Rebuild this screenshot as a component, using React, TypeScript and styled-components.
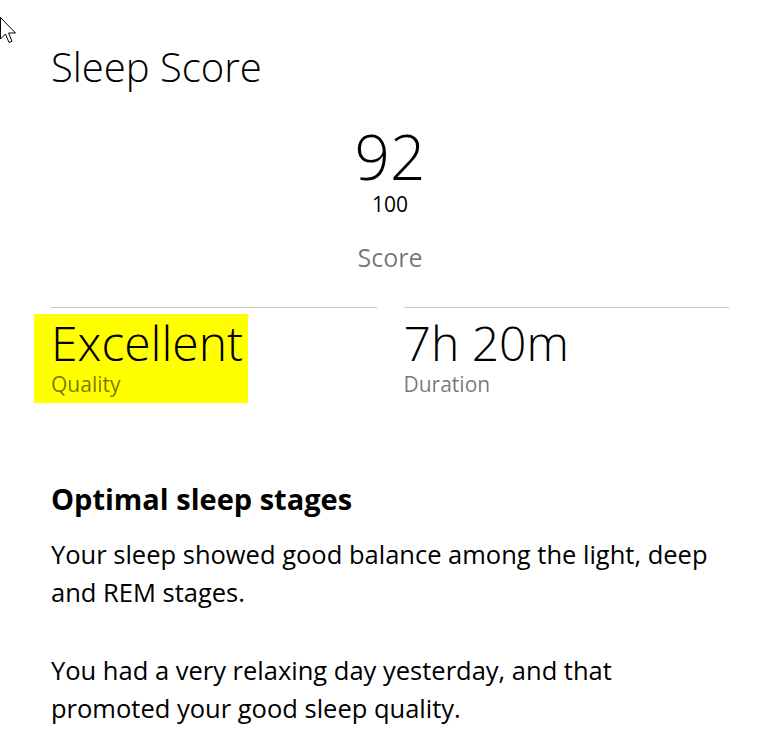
import React, { FC } from 'react'
import styled, { createGlobalStyle } from 'styled-components'

const GlobalStyle = createGlobalStyle`
  html, body {
    margin: 0;
    padding: 0;
    background: #fff;
  }
  body {
    font-family: 'Open Sans', 'Noto Sans', sans-serif;
    color: #000;
  }
`

type Stat = { value: string; label: string; highlight?: boolean }

const stats: Stat[] = [
  { value: 'Excellent', label: 'Quality', highlight: true },
  { value: '7h 20m', label: 'Duration' },
]

const paragraphs = [
  'Your sleep showed good balance among the light, deep and REM stages.',
  'You had a very relaxing day yesterday, and that promoted your good sleep quality.',
]

const Cursor: FC = () => (
  <CursorWrap>
    <svg width="20" height="30" viewBox="0 0 20 30">
      <path
        d="M0.5 0.5 L0.5 22 L5.5 17 L9 25.5 L12 24.3 L8.6 16 L15.5 16 Z"
        fill="#fff"
        stroke="#000"
        strokeWidth="1"
        strokeLinejoin="miter"
      />
    </svg>
  </CursorWrap>
)

const App: FC = () => (
  <>
    <GlobalStyle />
    <Page>
      <Cursor />
      <Title>Sleep Score</Title>
      <ScoreBlock>
        <ScoreValue>92</ScoreValue>
        <ScoreMax>100</ScoreMax>
        <ScoreLabel>Score</ScoreLabel>
      </ScoreBlock>
      <StatsRow>
        {stats.map((s) => (
          <StatCell key={s.label}>
            <StatBody highlight={s.highlight}>
              <StatValue>{s.value}</StatValue>
              <StatLabel>{s.label}</StatLabel>
            </StatBody>
          </StatCell>
        ))}
      </StatsRow>
      <Insight>
        <InsightTitle>Optimal sleep stages</InsightTitle>
        {paragraphs.map((p) => (
          <InsightText key={p}>{p}</InsightText>
        ))}
      </Insight>
    </Page>
  </>
)

export default App

const Page = styled.div`
  position: relative;
  width: 678px;
  padding: 40px 48px 0 51px;
`

const CursorWrap = styled.div`
  position: absolute;
  left: 0;
  top: 17px;
  line-height: 0;
`

const Title = styled.h1`
  margin: 0;
  font-size: 40px;
  font-weight: 300;
  line-height: 54px;
  letter-spacing: 0;
`

const ScoreBlock = styled.div`
  display: flex;
  flex-direction: column;
  align-items: center;
  margin-top: 26px;
`

const ScoreValue = styled.div`
  font-size: 62px;
  font-weight: 300;
  line-height: 72px;
`

const ScoreMax = styled.div`
  font-size: 21px;
  line-height: 26px;
  margin-top: -1px;
`

const ScoreLabel = styled.div`
  font-size: 25px;
  line-height: 34px;
  margin-top: 23px;
  color: rgba(0, 0, 0, 0.55);
`

const StatsRow = styled.div`
  display: grid;
  grid-template-columns: 1fr 1fr;
  column-gap: 27px;
  margin-top: 33px;
`

const StatCell = styled.div`
  border-top: 1px solid #c8c8c8;
  padding-top: 6px;
`

const StatBody = styled.div<{ highlight?: boolean }>`
  display: inline-flex;
  flex-direction: column;
  background: ${(p) => (p.highlight ? '#ffff00' : 'transparent')};
  padding: ${(p) => (p.highlight ? '0 5px 0 17px' : '0')};
  margin-left: ${(p) => (p.highlight ? '-17px' : '0')};
  height: 89px;
  box-sizing: border-box;
`

const StatValue = styled.div`
  font-size: 48px;
  font-weight: 300;
  line-height: 58px;
`

const StatLabel = styled.div`
  font-size: 21px;
  line-height: 28px;
  margin-top: -2px;
  color: rgba(0, 0, 0, 0.55);
`

const Insight = styled.div`
  margin-top: 76px;
`

const InsightTitle = styled.h2`
  margin: 0 0 16px;
  font-size: 29px;
  font-weight: 700;
  line-height: 40px;
`

const InsightText = styled.p`
  margin: 0 0 40px;
  font-size: 25.5px;
  line-height: 38px;
  max-width: 678px;
`
